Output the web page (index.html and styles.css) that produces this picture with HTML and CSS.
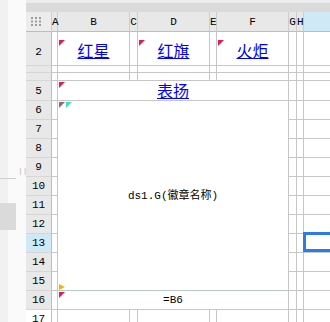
FILE: index.html
```html
<!DOCTYPE html>
<html lang="zh-CN">
<head>
  <meta charset="UTF-8">
  <title>报表设计</title>
  <link rel="stylesheet" href="styles.css">
</head>
<body>
  <div class="app">
    <aside class="side">
      <div class="side-top"></div>
      <div class="side-grip">||</div>
      <div class="side-line"></div>
      <div class="side-block"></div>
    </aside>

    <main class="main">
      <div class="strip"></div>
      <table class="sheet">
        <colgroup>
          <col class="c-hd"><col class="c-a"><col class="c-b"><col class="c-c"><col class="c-b">
          <col class="c-e"><col class="c-b"><col class="c-c"><col class="c-e"><col class="c-i">
        </colgroup>
        <tr class="row-head">
          <th class="corner">
            <svg width="11" height="9" viewBox="0 0 11 9">
              <rect x="0" y="0" width="2" height="2"/><rect x="4" y="0" width="2" height="2"/><rect x="8" y="0" width="2" height="2"/>
              <rect x="0" y="3.5" width="2" height="2"/><rect x="4" y="3.5" width="2" height="2"/><rect x="8" y="3.5" width="2" height="2"/>
              <rect x="0" y="7" width="2" height="2"/><rect x="4" y="7" width="2" height="2"/><rect x="8" y="7" width="2" height="2"/>
            </svg>
          </th>
          <th>A</th><th>B</th><th>C</th><th>D</th><th>E</th><th>F</th><th>G</th><th>H</th><th class="on"></th>
        </tr>
        <!-- row 1 is hidden, row 2 takes its space -->
        <tr class="row-2">
          <th>2</th><td></td>
          <td class="cell"><span class="flag"></span><span class="link">红星</span></td>
          <td></td>
          <td class="cell"><span class="flag"></span><span class="link">红旗</span></td>
          <td></td>
          <td class="cell"><span class="flag"></span><span class="link">火炬</span></td>
          <td></td><td></td><td></td>
        </tr>
        <tr class="row-3">
          <th></th><td></td><td></td><td></td><td></td><td></td><td></td><td></td><td></td><td></td>
        </tr>
        <tr class="row-4">
          <th></th><td></td><td></td><td></td><td></td><td></td><td></td><td></td><td></td><td></td>
        </tr>
        <tr>
          <th>5</th><td></td>
          <td class="cell" colspan="5"><span class="flag"></span><span class="link">表扬</span></td>
          <td></td><td></td><td></td>
        </tr>
        <tr>
          <th>6</th><td></td>
          <td class="cell big" colspan="5" rowspan="10">
            <span class="flag flag-dim"></span>
            <span class="flag flag-cyan"></span>
            <span class="mark"></span>
            ds1.G(徽章名称)
          </td>
          <td></td><td></td><td></td>
        </tr>
        <tr><th>7</th><td></td><td></td><td></td><td></td></tr>
        <tr><th>8</th><td></td><td></td><td></td><td></td></tr>
        <tr><th>9</th><td></td><td></td><td></td><td></td></tr>
        <tr><th>10</th><td></td><td></td><td></td><td></td></tr>
        <tr><th>11</th><td></td><td></td><td></td><td></td></tr>
        <tr><th>12</th><td></td><td></td><td></td><td></td></tr>
        <tr><th class="on">13</th><td></td><td></td><td></td><td class="sel"></td></tr>
        <tr><th>14</th><td></td><td></td><td></td><td></td></tr>
        <tr><th>15</th><td></td><td></td><td></td><td></td></tr>
        <tr>
          <th>16</th><td></td>
          <td class="cell" colspan="5"><span class="flag"></span>=B6</td>
          <td></td><td></td><td></td>
        </tr>
        <tr>
          <th class="blank">17</th><td></td><td></td><td></td><td></td><td></td><td></td><td></td><td></td><td></td>
        </tr>
      </table>
    </main>
  </div>
</body>
</html>
```

FILE: styles.css
```css
* {
  box-sizing: border-box;
}

html, body {
  margin: 0;
  height: 100%;
  overflow: hidden;
}

body {
  background: #fff;
  color: #000;
  font-family: "Liberation Mono", "Noto Sans CJK SC", monospace;
  font-size: 11px;
}

.app {
  display: flex;
  height: 322px;
}

/* left panel */
.side {
  width: 26px;
  flex: none;
  display: flex;
  flex-direction: column;
  background: linear-gradient(to right, #f1f1f1 8px, #fafafa 8px);
}

.side-top {
  height: 166px;
}

.side-grip {
  height: 10px;
  padding-left: 18px;
  font-size: 8px;
  line-height: 10px;
  color: #b4b4b4;
}

.side-line {
  width: 16px;
  height: 1px;
  margin-top: 2px;
  background: #cfcfcf;
}

.side-block {
  width: 16px;
  height: 27px;
  margin-top: 24px;
  background: #dadada;
}

/* sheet */
.main {
  flex: 1;
  overflow: hidden;
}

.strip {
  height: 12px;
  background: #dadada;
  border-top: 3px solid #ececec;
}

.sheet {
  border-collapse: separate;
  border-spacing: 0;
  table-layout: fixed;
  width: 358px;
}

.c-hd { width: 26px; }
.c-a { width: 6px; }
.c-b { width: 72px; }
.c-c { width: 8px; }
.c-e { width: 7px; }
.c-i { width: 80px; }

.sheet tr {
  height: 19px;
}

.sheet .row-head { height: 20px; }
.sheet .row-2 { height: 34px; }
.sheet .row-3 { height: 7px; }
.sheet .row-4 { height: 8px; }

.sheet td,
.sheet th {
  padding: 0;
  border-right: 1px solid #c6c6c6;
  border-bottom: 1px solid #c6c6c6;
  line-height: 12px;
  font-weight: normal;
  text-align: center;
  white-space: nowrap;
}

.sheet th {
  background: #e8e8e8;
  border-bottom-color: #d6d6d6;
  border-right-color: #bdbdbd;
}

.row-head th {
  border-bottom-color: #bdbdbd;
  border-right-color: #cdcdcd;
}

.sheet .row-2 th {
  padding-top: 7px;
}

.sheet .row-2 .cell {
  padding-top: 4px;
}

.row-2 .flag {
  top: 8px;
}

.sheet th.corner {
  background: #ececec;
  text-align: left;
  padding-left: 5px;
}

.corner svg {
  display: block;
  fill: #9c9c9c;
}

.sheet th.on {
  background: #cfe9f7;
}

.sheet th.blank {
  background: #fff;
}

.cell {
  position: relative;
}

.link {
  color: #0000ff;
  text-decoration: underline;
  font-family: "Noto Sans CJK SC", sans-serif;
  font-size: 16px;
  line-height: 18px;
}

.sheet .big {
  border-bottom-color: #b6cac3;
}

/* corner markers */
.flag {
  position: absolute;
  top: 1px;
  left: 1px;
  width: 0;
  height: 0;
  border-top: 6px solid #e8194c;
  border-right: 6px solid transparent;
}

.flag-dim {
  border-top-color: #9a6474;
}

.flag-cyan {
  left: 8px;
  border-top-color: #3fe0c4;
}

.mark {
  position: absolute;
  left: 1px;
  bottom: 0;
  width: 0;
  height: 0;
  border-left: 6px solid #f4b400;
  border-top: 3px solid transparent;
  border-bottom: 3px solid transparent;
}

.sel {
  position: relative;
}

.sel::after {
  content: "";
  position: absolute;
  left: -1px;
  top: -2px;
  right: 0;
  bottom: 0;
  border: 3px solid #2b7de6;
}
```
